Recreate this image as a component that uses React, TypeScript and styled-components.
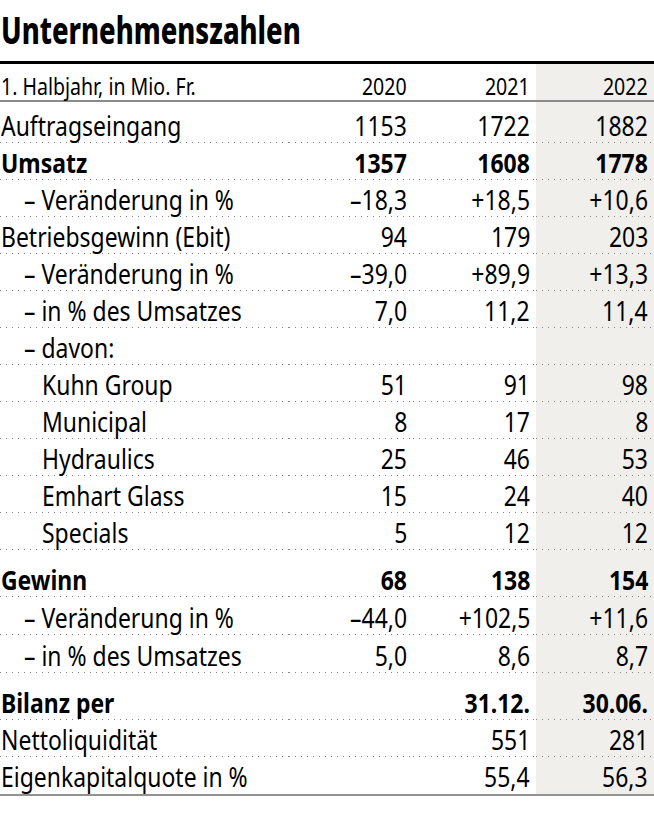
import React from 'react';
import styled, { createGlobalStyle } from 'styled-components';

const Global = createGlobalStyle`
  html, body { margin: 0; padding: 0; background: #fff; }
  body {
    font-family: "Noto Sans", "Open Sans", "Liberation Sans", sans-serif;
    color: #111;
  }
`;

const SHADE = '#f0efeb';
const DOTS = 'linear-gradient(to right, #858585 1px, transparent 1px) 0 100% / 6px 1px repeat-x';
const COLS = 'minmax(0, 1fr) 124px 123px 118px';

const Page = styled.div`
  width: 654px;
`;

const Title = styled.h1`
  margin: 0;
  padding: 10px 0 13px 1px;
  font-size: 38px;
  line-height: 38px;
  font-weight: 800;
  color: #000;
  border-bottom: 3px solid #000;
`;

const Narrow = styled.span<{ $scale: number; $right?: boolean }>`
  display: inline-block;
  white-space: nowrap;
  transform: scaleX(${(p) => p.$scale});
  transform-origin: ${(p) => (p.$right ? 'right' : 'left')} bottom;
`;

const Table = styled.div`
  display: flex;
  flex-direction: column;
  border-bottom: 2px solid #929292;
`;

const HeaderRow = styled.div`
  display: grid;
  grid-template-columns: ${COLS};
  height: 36px;
  border-bottom: 2px solid #8a8a8a;
  font-size: 23px;
  line-height: 23px;
`;

const Row = styled.div<{ $h: number }>`
  display: grid;
  grid-template-columns: ${COLS};
  height: ${(p) => p.$h}px;
  font-size: 27px;
  line-height: 27px;
`;

const Cell = styled.div<{ $num?: boolean; $shade?: boolean; $dots?: boolean; $bold?: boolean; $pb: number; $indent?: number }>`
  display: flex;
  align-items: flex-end;
  justify-content: ${(p) => (p.$num ? 'flex-end' : 'flex-start')};
  padding: 0 ${(p) => (p.$num ? '6px' : '0')} ${(p) => p.$pb}px
    ${(p) => (p.$num ? 0 : p.$indent === 2 ? 42 : p.$indent === 1 ? 24 : 1)}px;
  font-weight: ${(p) => (p.$bold ? 700 : 400)};
  color: #000;
  white-space: nowrap;
  overflow: visible;
  background: ${(p) => [p.$dots ? DOTS : null, p.$shade ? SHADE : null].filter(Boolean).join(', ') || 'none'};
`;

type RowData = {
  label: string;
  v: [string, string, string];
  indent?: 0 | 1 | 2;
  bold?: boolean;
  h?: number;
  last?: boolean;
};

const rows: RowData[] = [
  { label: 'Auftragseingang', v: ['1153', '1722', '1882'], h: 41 },
  { label: 'Umsatz', v: ['1357', '1608', '1778'], bold: true },
  { label: 'Veränderung in %', indent: 1, v: ['–18,3', '+18,5', '+10,6'] },
  { label: 'Betriebsgewinn (Ebit)', v: ['94', '179', '203'] },
  { label: 'Veränderung in %', indent: 1, v: ['–39,0', '+89,9', '+13,3'] },
  { label: 'in % des Umsatzes', indent: 1, v: ['7,0', '11,2', '11,4'] },
  { label: 'davon:', indent: 1, v: ['', '', ''] },
  { label: 'Kuhn Group', indent: 2, v: ['51', '91', '98'] },
  { label: 'Municipal', indent: 2, v: ['8', '17', '8'] },
  { label: 'Hydraulics', indent: 2, v: ['25', '46', '53'] },
  { label: 'Emhart Glass', indent: 2, v: ['15', '24', '40'] },
  { label: 'Specials', indent: 2, v: ['5', '12', '12'] },
  { label: 'Gewinn', bold: true, h: 47, v: ['68', '138', '154'] },
  { label: 'Veränderung in %', indent: 1, h: 38, v: ['–44,0', '+102,5', '+11,6'] },
  { label: 'in % des Umsatzes', indent: 1, h: 38, v: ['5,0', '8,6', '8,7'] },
  { label: 'Bilanz per', bold: true, h: 47, v: ['', '31.12.', '30.06.'] },
  { label: 'Nettoliquidität', v: ['', '551', '281'] },
  { label: 'Eigenkapitalquote in %', v: ['', '55,4', '56,3'], last: true },
];

const S = 0.85;

export default function App() {
  return (
    <Page>
      <Global />
      <Title>
        <Narrow $scale={0.72}>Unternehmenszahlen</Narrow>
      </Title>
      <Table>
        <HeaderRow>
          <Cell $pb={2}>
            <Narrow $scale={S}>1. Halbjahr, in Mio. Fr.</Narrow>
          </Cell>
          {['2020', '2021', '2022'].map((y, k) => (
            <Cell key={y} $num $shade={k === 2} $pb={2}>
              <Narrow $scale={S} $right>{y}</Narrow>
            </Cell>
          ))}
        </HeaderRow>
        {rows.map((r, i) => {
          const dots = !r.last;
          return (
            <Row key={i} $h={r.h ?? 37}>
              <Cell $dots={dots} $bold={r.bold} $pb={4} $indent={r.indent ?? 0}>
                <Narrow $scale={S}>
                  {r.indent === 1 ? '– ' : ''}
                  {r.label}
                </Narrow>
              </Cell>
              {r.v.map((v, k) => (
                <Cell key={k} $num $shade={k === 2} $dots={dots} $bold={r.bold} $pb={4}>
                  <Narrow $scale={S} $right>{v}</Narrow>
                </Cell>
              ))}
            </Row>
          );
        })}
      </Table>
    </Page>
  );
}
